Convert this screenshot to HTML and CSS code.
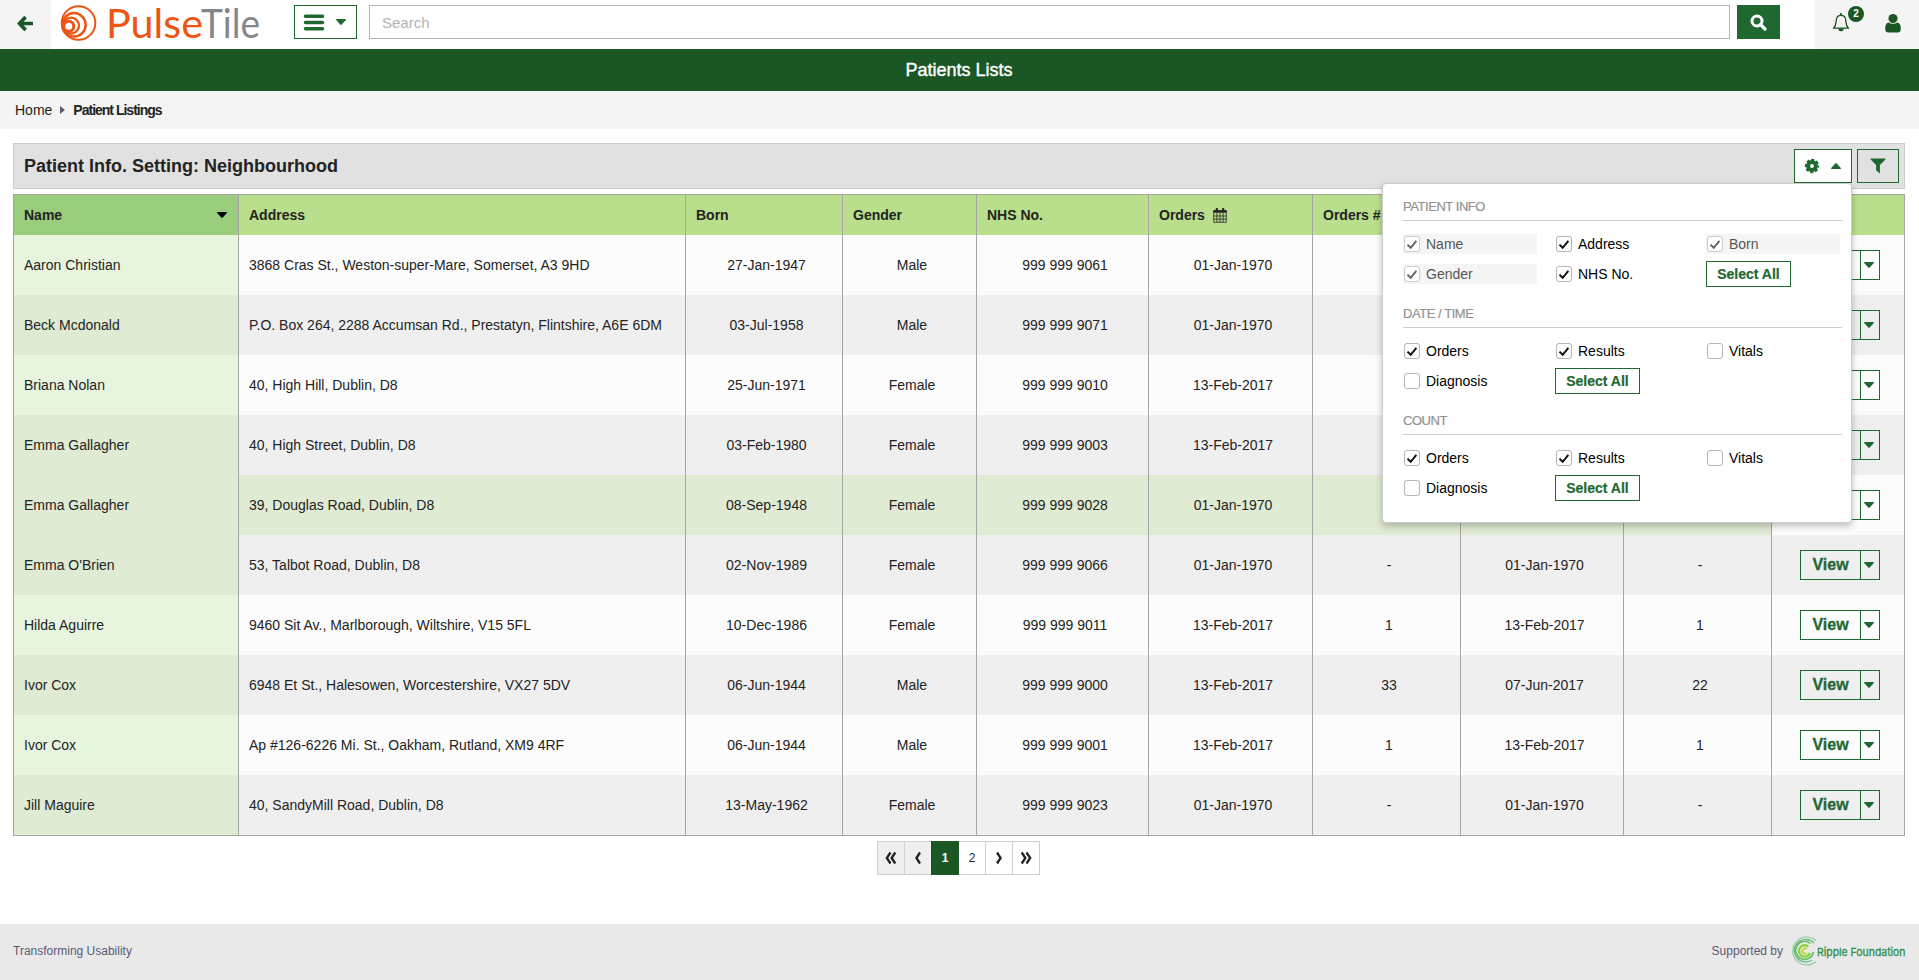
FILE: index.html
```html
<!DOCTYPE html>
<html lang="en">
<head>
<meta charset="utf-8">
<title>Patients Lists</title>
<link rel="stylesheet" href="styles.css">
</head>
<body>
<svg width="0" height="0" class="defs">
  <symbol id="down" viewBox="0 0 10 6"><path d="M.4 0h9.2q.6.3.2.9L5.8 5.4q-.8.8-1.600 0L.2.9Q-.2.3.4 0z"/></symbol>
  <symbol id="tick" viewBox="0 0 16 16"><path d="M2.800 8.700l3.700 3.600L13 4.300" fill="none" stroke="currentColor" stroke-width="2.300"/></symbol>
</svg>
<header class="top">
  <div class="back"><svg width="16" height="17" viewBox="0 0 16 17"><path d="M8.600 2L2.500 8.500l6.100 6.500M3 8.500h13" fill="none" stroke="#1b5625" stroke-width="3.600"/></svg></div>
  <svg class="logo" width="202" height="40" viewBox="0 0 202 40">
    <g fill="none" stroke="#ef5413">
      <circle cx="18.500" cy="20" r="16.800" stroke-width="2"/>
      <circle cx="14" cy="21.800" r="11.700" stroke-width="2.500"/>
      <circle cx="11" cy="22.600" r="8" stroke-width="2.300"/>
      <circle cx="8.800" cy="23.300" r="5" stroke-width="3"/>
    </g>
    <text x="46" y="35.200" textLength="97" lengthAdjust="spacingAndGlyphs" class="pulse">Pulse</text>
    <text x="141" y="35.200" textLength="59" lengthAdjust="spacingAndGlyphs" class="tile">Tile</text>
  </svg>
  <button class="menu"><svg width="20" height="17"><path d="M1.500 2.200h17M1.500 8.500h17M1.500 14.800h17" stroke="#1f6931" stroke-width="3.600" stroke-linecap="round"/></svg><svg class="caret" width="10" height="6"><use href="#down"/></svg></button>
  <input class="search" placeholder="Search">
  <button class="go"><svg width="17" height="17"><circle cx="7" cy="7" r="5" fill="none" stroke="#fff" stroke-width="3"/><path d="M10.500 10.500l4.500 4.500" stroke="#fff" stroke-width="3.200" stroke-linecap="round"/></svg></button>
  <div class="user">
    <div class="bell"><svg width="18" height="19" viewBox="0 0 18 19"><path d="M1.500 15.200C4.300 12.500 4 10 4.300 7 4.600 4 6.300 2.400 9 2.400s4.400 1.600 4.700 4.600c.3 3 0 5.500 2.800 8.200z" fill="none" stroke="#1b5625" stroke-width="1.300" stroke-linejoin="round"/><path d="M8.200 0h1.600v2H8.200zM6.300 15.500h5.400a2.700 2.800 0 0 1-5.400 0z" fill="#1b5625"/></svg><span class="badge">2</span></div>
    <svg width="16" height="19" viewBox="0 0 16 19"><circle cx="8" cy="4.600" r="4.600" fill="#1b5625"/><path d="M3.400 8.500q4.600 2.800 9.200 0c2.400.6 3.200 3 3.200 6.500 0 2-1 3.500-3 3.500H3.200c-2 0-3-1.500-3-3.500 0-3.500.8-5.900 3.200-6.500z" fill="#1b5625"/></svg>
  </div>
</header>
<h1 class="title">Patients Lists</h1>
<nav class="crumbs"><span>Home</span><svg width="5" height="8"><path d="M0 0l5 4-5 4z" fill="#5b5975"/></svg><b>Patient Listings</b></nav>
<main class="main">
  <section class="panel">
    <h2>Patient Info. Setting: Neighbourhood</h2>
    <div class="tools">
      <button class="gear"><svg width="16" height="16" viewBox="-8 -8 16 16"><circle r="3.900" fill="none" stroke="#1f6931" stroke-width="4"/><circle r="6.200" fill="none" stroke="#1f6931" stroke-width="2" stroke-dasharray="3.100 1.770" stroke-dashoffset="1.550"/></svg><svg class="caret up" width="10" height="6"><use href="#down"/></svg></button>
      <button class="filter"><svg width="16" height="16"><path d="M.8.500h14.400q.8.400.2 1L9.900 7v8.500L6.100 12.300V7L.6 1.500q-.6-.6.2-1z" fill="#1f6931"/></svg></button>
      <div class="drop" id="drop"></div>
    </div>
  </section>
  <div class="grid" id="grid"></div>
  <div class="pages">
    <span class="off"><svg width="12" height="12"><path d="M5.500.500L1.800 6l3.700 5.500M10.300.500L6.600 6l3.700 5.500"/></svg></span><span class="off"><svg width="6" height="12"><path d="M5 .5L1.400 6 5 11.500"/></svg></span><span class="on">1</span><span>2</span><span><svg width="6" height="12"><path d="M1 .5L4.600 6 1 11.500"/></svg></span><span><svg width="12" height="12"><path d="M1.700.500L5.400 6l-3.700 5.500M6.500.500L10.200 6l-3.700 5.500"/></svg></span>
  </div>
</main>
<footer class="foot">
  <span>Transforming Usability</span>
  <div class="by"><span>Supported by</span>
  <svg width="116" height="30" viewBox="0 0 116 30">
    <g fill="none">
      <path d="M26 4.500A14 14 0 1 0 26 25.500" stroke="#8fcba0" stroke-width="1.200"/>
      <path d="M24 7A11.300 11.300 0 1 0 22 24" stroke="#63b878" stroke-width="1.200"/>
      <path d="M20.500 7.500A9 9 0 1 0 23.500 16" stroke="#5dbb63" stroke-width="1.500"/>
      <path d="M18.500 10.700A5.700 5.700 0 1 0 20 17" stroke="#8fd03e" stroke-width="2.400"/>
      <path d="M16.500 13.200a2.500 2.500 0 1 0 0 3.600" stroke="#b5d922" stroke-width="1.600"/>
    </g>
    <text x="27" y="19.500" textLength="88.500" lengthAdjust="spacingAndGlyphs" class="ripple">Ripple Foundation</text>
  </svg></div>
</footer>
<script src="app.js"></script>
</body>
</html>
```

FILE: styles.css
```css
* { box-sizing: border-box; }
body { margin: 0; height: 980px; display: flex; flex-direction: column; overflow: hidden; background: #fff; color: #232323; font: 14px "Liberation Sans", Arial, sans-serif; }
button { padding: 0; margin: 0; border: 1px solid #1f6931; background: #fff; font: inherit; color: #1f6931; display: flex; align-items: center; justify-content: center; }
svg { display: block; flex: none; overflow: visible; }
.defs { position: absolute; }
.caret { fill: #1f6931; }
.up { transform: scaleY(-1); }

.top { height: 49px; display: flex; align-items: flex-start; flex: none; }
.back { width: 51px; height: 49px; background: #f4f4f4; padding: 15px 0 0 17px; }
.logo { margin: 3px 0 0 9px; }
.pulse, .tile { font: 41px Lato, "Open Sans", sans-serif; }
.pulse { fill: #ef5413; }
.tile { fill: #85868a; }
.menu { width: 63px; height: 34px; margin: 5px 12px 0 32px; gap: 12px; padding-right: 2px; }
.search { width: 1361px; height: 34px; margin-top: 5px; border: 1px solid #b3b3b3; padding: 0 12px; font: 15px "Liberation Sans", Arial, sans-serif; }
.search::placeholder { color: #b3b3b3; opacity: 1; }
.go { width: 43px; height: 34px; margin: 5px 0 0 7px; background: #1f6931; }
.user { width: 104px; height: 49px; margin-left: auto; background: #f4f4f4; display: flex; justify-content: space-between; padding: 14px 18px 0 17px; }
.bell { position: relative; margin-top: -1px; }
.badge { position: absolute; left: 16px; top: -7px; width: 16px; height: 16px; border-radius: 50%; background: #1b5625; color: #fff; font-size: 10px; font-weight: bold; line-height: 16px; text-align: center; }

.title { height: 42px; flex: none; margin: 0; padding-right: 1px; background: #1b5625; color: #fff; font-size: 18px; font-weight: normal; line-height: 42px; text-align: center; -webkit-text-stroke: .4px #fff; }
.crumbs { height: 38px; flex: none; background: #f4f4f4; display: flex; align-items: center; padding-left: 15px; }
.crumbs svg { margin: 0 8px; }
.crumbs b { letter-spacing: -1px; }

.main { padding: 14px 14px 0 13px; flex: 1; }
.panel { height: 46px; background: #e1e1e1; border: 1px solid #ccc; display: flex; justify-content: space-between; padding: 5px 5px 0 10px; }
.panel h2 { margin: 0; font-size: 18px; line-height: 34px; }
.tools { position: relative; display: flex; gap: 5px; }
.gear { width: 58px; height: 34px; gap: 11px; padding-right: 2px; }
.filter { width: 42px; height: 34px; background: transparent; }

.drop { position: absolute; right: 47px; top: 34px; width: 470px; height: 340px; z-index: 2; background: #fff; border: 1px solid #ccc; border-radius: 4px; box-shadow: 0 3px 7px rgba(0,0,0,.25); padding: 14px 9px 0 20px; color: #000; }
.drop h3 { margin: 0 0 13px; height: 23px; border-bottom: 1px solid #ccc; font-size: 13px; font-weight: normal; line-height: 17px; color: #929292; letter-spacing: -.45px; -webkit-text-stroke: .2px #929292; }
.group { height: 107px; }
.opts { display: grid; grid-template-columns: 152px 151px 134px; row-gap: 10px; }
.opt { width: 134px; height: 20px; display: flex; align-items: center; gap: 6px; padding-left: 1px; }
.dis { background: #f5f5f5; color: #555; }
.box { width: 16px; height: 16px; border: 1px solid #b5b5b5; border-radius: 3px; background: #fff; color: #111; }
.box svg { width: 14px; height: 14px; }
.dis .box { border-color: #ccc; color: #666; }
.all { width: 85px; height: 26px; margin: -3px 0; font-weight: bold; -webkit-text-stroke: .2px #1f6931; }

.grid { margin-top: 5px; width: 1892px; border: 1px solid #a5a5a5; }
.row { display: grid; grid-template-columns: 225px 447px 157px 134px 172px 164px 148px 163px 148px 132px; height: 60px; background: #fcfcfc; }
.row > div { display: flex; align-items: center; justify-content: center; border-right: 1px solid #a5a5a5; padding-left: 5px; }
.row > div:last-child { border-right: 0; padding-left: 4px; }
.row > div:nth-child(1), .row > div:nth-child(2) { justify-content: flex-start; padding-left: 10px; }
.row > div:first-child { background: #e8f5de; }
.row:nth-child(odd) { background: #efefef; }
.row:nth-child(odd) > div:first-child { background: #e0ebd4; }
.row.hot > div:not(:last-child) { background: #e0ebd4; }
.grid .head { height: 40px; background: #badf8c; font-weight: bold; }
.grid .head > div { justify-content: flex-start; padding-left: 10px; gap: 8px; }
.grid .head > div:first-child { background: #99cc7c; justify-content: space-between; padding-right: 11px; }
.view { width: 80px; height: 30px; display: flex; border: 1px solid #1f6931; color: #1f6931; font-size: 16px; font-weight: bold; -webkit-text-stroke: .3px #1f6931; }
.view span { width: 60px; line-height: 28px; text-align: center; border-right: 1px solid #1f6931; }
.view svg { margin: 11px 0 0 3px; }

.pages { display: flex; justify-content: center; margin-top: 5px; padding-right: 2px; }
.pages span { width: 28px; height: 34px; margin-right: -1px; border: 1px solid #d0d0d0; display: flex; align-items: center; justify-content: center; font-size: 12px; }
.pages path { fill: none; stroke: #222; stroke-width: 2.3; }
.pages .off { background: #efefef; }
.pages .on { background: #1b5625; border-color: #1b5625; color: #fff; font-weight: bold; position: relative; }

.foot { height: 56px; flex: none; background: #e9e9e9; display: flex; justify-content: space-between; padding: 0 13px; color: #5b5975; font-size: 12px; }
.foot > span { line-height: 54px; }
.by { display: flex; align-items: center; gap: 7px; line-height: 54px; height: 54px; }
.ripple { font: 11px Inter, "Open Sans", sans-serif; fill: #2f8f4e; stroke: #2f8f4e; stroke-width: .3px; }
```

FILE: app.js
```js
const caret = '<svg class="caret" width="10" height="6"><use href="#down"/></svg>';
const cal = '<svg width="14" height="15" viewBox="0 0 14 15"><path d="M.7 2.700h12.600v11.600H.7zM.7 8h12.600M.7 11.100h12.600M3.900 5v9M7 5v9M10.100 5v9" fill="none" stroke="#232323" stroke-width=".8"/><path d="M.4 2.200h13.200v2.600H.4zM2.800 0h2v3.500h-2zM9.200 0h2v3.500h-2z" fill="#232323"/></svg>';
const rows = [
  ["Aaron Christian", "3868 Cras St., Weston-super-Mare, Somerset, A3 9HD", "27-Jan-1947", "Male", "999 999 9061", "01-Jan-1970", "-", "01-Jan-1970", "-"],
  ["Beck Mcdonald", "P.O. Box 264, 2288 Accumsan Rd., Prestatyn, Flintshire, A6E 6DM", "03-Jul-1958", "Male", "999 999 9071", "01-Jan-1970", "-", "01-Jan-1970", "-"],
  ["Briana Nolan", "40, High Hill, Dublin, D8", "25-Jun-1971", "Female", "999 999 9010", "13-Feb-2017", "", "", ""],
  ["Emma Gallagher", "40, High Street, Dublin, D8", "03-Feb-1980", "Female", "999 999 9003", "13-Feb-2017", "", "", ""],
  ["Emma Gallagher", "39, Douglas Road, Dublin, D8", "08-Sep-1948", "Female", "999 999 9028", "01-Jan-1970", "", "", ""],
  ["Emma O'Brien", "53, Talbot Road, Dublin, D8", "02-Nov-1989", "Female", "999 999 9066", "01-Jan-1970", "-", "01-Jan-1970", "-"],
  ["Hilda Aguirre", "9460 Sit Av., Marlborough, Wiltshire, V15 5FL", "10-Dec-1986", "Female", "999 999 9011", "13-Feb-2017", "1", "13-Feb-2017", "1"],
  ["Ivor Cox", "6948 Et St., Halesowen, Worcestershire, VX27 5DV", "06-Jun-1944", "Male", "999 999 9000", "13-Feb-2017", "33", "07-Jun-2017", "22"],
  ["Ivor Cox", "Ap #126-6226 Mi. St., Oakham, Rutland, XM9 4RF", "06-Jun-1944", "Male", "999 999 9001", "13-Feb-2017", "1", "13-Feb-2017", "1"],
  ["Jill Maguire", "40, SandyMill Road, Dublin, D8", "13-May-1962", "Female", "999 999 9023", "01-Jan-1970", "-", "01-Jan-1970", "-"]
];
rows.slice(0, 2).forEach(r => r.splice(6, 3, "", "", ""));
const head = ["Name" + caret.replace('"caret"', '"sort"'), "Address", "Born", "Gender", "NHS No.", "Orders" + cal, "Orders #", "", "", ""];
const line = (cls, cells) => `<div class="row ${cls}">${cells.map(c => `<div>${c}</div>`).join("")}</div>`;
const view = `<div class="view"><span>View</span>${caret}</div>`;
document.getElementById("grid").innerHTML = line("head", head) + rows.map((r, i) => line(i === 4 ? "hot" : "", [...r, view])).join("");

const opt = (name, on, dis) => `<div class="opt${dis ? " dis" : ""}"><span class="box">${on ? '<svg><use href="#tick"/></svg>' : ""}</span>${name}</div>`;
const all = '<button class="all">Select All</button>';
const group = (title, body) => `<div class="group"><h3>${title}</h3><div class="opts">${body}</div></div>`;
const common = opt("Orders", 1) + opt("Results", 1) + opt("Vitals") + opt("Diagnosis") + all;
document.getElementById("drop").innerHTML =
  group("PATIENT INFO", opt("Name", 1, 1) + opt("Address", 1) + opt("Born", 1, 1) + opt("Gender", 1, 1) + opt("NHS No.", 1) + all) +
  group("DATE / TIME", common) + group("COUNT", common);
```
